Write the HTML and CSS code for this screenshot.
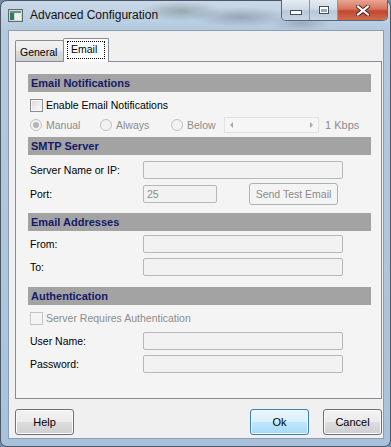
FILE: index.html
```html
<!DOCTYPE html>
<html lang="en">
<head>
  <meta charset="UTF-8">
  <title>Advanced Configuration</title>
  <link rel="stylesheet" href="styles.css">
</head>
<body>
  <div class="window">
    <div class="titlebar">
      <svg class="app-icon" width="15" height="13" viewBox="0 0 15 13">
        <rect x="0.5" y="0.5" width="14" height="12" fill="#cfd8d4" stroke="#5d6a66"/>
        <rect x="2" y="2" width="4" height="9" fill="#2f7a68"/>
        <rect x="7" y="2" width="6" height="9" fill="#e8eeec"/>
        <rect x="2" y="2" width="11" height="2" fill="#6f8f86"/>
      </svg>
      <span class="title">Advanced Configuration</span>
      <div class="caption">
        <span class="cap cap-min"><span class="glyph-min"></span></span>
        <span class="cap cap-max"><span class="glyph-max"></span></span>
        <span class="cap cap-close">
          <svg width="14" height="11" viewBox="0 0 14 11">
            <path d="M2 1.5 L12 9.5 M12 1.5 L2 9.5" stroke="#4a2018" stroke-width="4" stroke-linecap="square"/>
            <path d="M2 1.5 L12 9.5 M12 1.5 L2 9.5" stroke="#ffffff" stroke-width="2.2" stroke-linecap="square"/>
          </svg>
        </span>
      </div>
    </div>

    <div class="client">
      <div class="tabs">
        <div class="tab">General</div>
        <div class="tab tab-active"><span class="focus">Email</span></div>
      </div>

      <div class="panel">
        <section class="group g1">
          <div class="group-head">Email Notifications</div>
          <label class="row check-row first">
            <span class="checkbox"></span>
            <span>Enable Email Notifications</span>
          </label>
          <div class="row radio-row">
            <span class="opt opt-manual"><span class="radio checked"></span>Manual</span>
            <span class="opt opt-always"><span class="radio"></span>Always</span>
            <span class="opt opt-below"><span class="radio"></span>Below</span>
            <span class="slider">
              <span class="arrow arrow-left"></span>
              <span class="arrow arrow-right"></span>
            </span>
            <span class="rate">1 Kbps</span>
          </div>
        </section>

        <section class="group g2">
          <div class="group-head">SMTP Server</div>
          <div class="row field-row first">
            <span class="lbl">Server Name or IP:</span>
            <span class="field"></span>
          </div>
          <div class="row port-row">
            <span class="lbl">Port:</span>
            <span class="field field-port">25</span>
            <span class="btn btn-disabled">Send Test Email</span>
          </div>
        </section>

        <section class="group g3">
          <div class="group-head">Email Addresses</div>
          <div class="row field-row first">
            <span class="lbl">From:</span>
            <span class="field"></span>
          </div>
          <div class="row field-row">
            <span class="lbl">To:</span>
            <span class="field"></span>
          </div>
        </section>

        <section class="group g4">
          <div class="group-head">Authentication</div>
          <label class="row check-row first disabled">
            <span class="checkbox checkbox-disabled"></span>
            <span>Server Requires Authentication</span>
          </label>
          <div class="row field-row user-row">
            <span class="lbl">User Name:</span>
            <span class="field"></span>
          </div>
          <div class="row field-row">
            <span class="lbl">Password:</span>
            <span class="field"></span>
          </div>
        </section>
      </div>

      <div class="actions">
        <span class="btn btn-dialog">Help</span>
        <span class="spacer"></span>
        <span class="btn btn-dialog btn-default">Ok</span>
        <span class="btn btn-dialog">Cancel</span>
      </div>
    </div>
  </div>
</body>
</html>
```

FILE: styles.css
```css
html, body
{
  margin: 0;
  padding: 0;
}
body
{
  width: 391px;
  height: 447px;
  overflow: hidden;
  font-family: "Liberation Sans", Arial, sans-serif;
  font-size: 10.5px;
  color: #000;
  background: #6f8aa6;
}
.window
{
  width: 391px;
  height: 447px;
  box-sizing: border-box;
  border: 1px solid #4d5867;
  border-radius: 7px;
  background:
    radial-gradient(ellipse 40px 10px at 180px 10px, rgba(70, 90, 80, 0.35), transparent),
    radial-gradient(ellipse 50px 10px at 240px 16px, rgba(60, 70, 90, 0.3), transparent),
    radial-gradient(ellipse 30px 8px at 300px 22px, rgba(60, 70, 90, 0.25), transparent),
    linear-gradient(180deg, #c9d8e8 0px, #b4c9df 30px, #a9c2dc 100%);
  display: flex;
  flex-direction: column;
}

/* title bar */
.titlebar
{
  height: 29px;
  display: flex;
  align-items: flex-start;
  padding-left: 7px;
}
.app-icon
{
  margin-top: 8px;
  flex: none;
}
.title
{
  margin-left: 7px;
  margin-top: 7px;
  font-size: 12px;
  color: #111;
  white-space: nowrap;
}
.caption
{
  margin-left: auto;
  margin-right: 2px;
  margin-top: -1px;
  display: flex;
  height: 20px;
  border: 1px solid #5a6677;
  border-top: none;
  border-radius: 0 0 5px 5px;
  overflow: hidden;
}
.cap
{
  display: flex;
  align-items: center;
  justify-content: center;
  height: 20px;
}
.cap-min, .cap-max
{
  width: 27px;
  background: linear-gradient(180deg, #e4ebf3 0%, #d0dbe7 45%, #b9c8d8 55%, #c7d5e3 100%);
  border-right: 1px solid #8796a8;
}
.cap-close
{
  width: 49px;
  background: linear-gradient(180deg, #e8a592 0%, #d7755e 45%, #c4472d 55%, #cf6a4f 100%);
}
.glyph-min
{
  width: 10px;
  height: 3px;
  margin-top: 5px;
  background: #fff;
  border: 1px solid #44505f;
}
.glyph-max
{
  width: 8px;
  height: 6px;
  border: 1px solid #44505f;
  box-shadow: inset 0 2px 0 #fff, inset 0 0 0 1px #fff;
  background: #9aa9bb;
}

/* client */
.client
{
  flex: none;
  height: 409px;
  margin: 0 6px 0 7px;
  box-sizing: border-box;
  background: #f0f0f0;
  border: 1px solid #8a9db3;
  padding: 7px 1px 0 6px;
}
.tabs
{
  display: flex;
  align-items: flex-end;
  height: 23px;
  position: relative;
  z-index: 1;
}
.tab
{
  height: 21px;
  box-sizing: border-box;
  width: 49px;
  padding-left: 4px;
  padding-top: 5px;
  border: 1px solid #898c95;
  border-bottom: none;
  border-radius: 2px 2px 0 0;
  background: linear-gradient(180deg, #f2f2f2 0%, #ebebeb 50%, #dddddd 51%, #cfcfcf 100%);
}
.tab-active
{
  height: 24px;
  width: 46px;
  margin-left: -1px;
  margin-bottom: -1px;
  padding: 2px 3px 0 3px;
  background: #fcfcfc;
}
.focus
{
  display: block;
  border: 1px dotted #000;
  padding: 1px 2px 3px 3px;
}
.panel
{
  height: 338px;
  box-sizing: border-box;
  border: 1px solid #898c95;
  background: #f4f4f4;
  padding: 12px 10px 0 12px;
}

/* sections */
.group-head
{
  height: 18px;
  line-height: 18px;
  background: #a3a3a3;
  color: #141a6a;
  font-weight: bold;
  font-size: 11px;
  padding-left: 3px;
}
.g2 { margin-top: 4px; }
.g3 { margin-top: 8px; }
.g4 { margin-top: 11px; }
.row
{
  display: flex;
  align-items: center;
  padding-left: 2px;
  white-space: nowrap;
}
.check-row
{
  height: 16px;
  margin-top: 5px;
}
.radio-row
{
  height: 16px;
  margin-top: 4px;
  color: #8c8c8c;
}
.field-row
{
  height: 18px;
  margin-top: 5px;
}
.g2 .field-row.first { margin-top: 6px; }
.g3 .field-row.first { margin-top: 4px; }
.user-row { margin-top: 6px; }
.port-row
{
  height: 22px;
  margin-top: 4px;
}
.lbl
{
  width: 113px;
  flex: none;
}
.disabled
{
  color: #8c8c8c;
}

/* controls */
.checkbox
{
  width: 11px;
  height: 11px;
  flex: none;
  border: 1px solid #8e8f8f;
  background: linear-gradient(135deg, #dcdcdc, #fbfbfb);
  box-shadow: inset 0 0 0 1px #f4f4f4;
  margin-right: 3px;
}
.checkbox-disabled
{
  border-color: #c4c4c4;
  background: #f4f4f4;
}
.opt
{
  display: flex;
  align-items: center;
}
.opt-manual { width: 70px; }
.opt-always { width: 71px; }
.opt-below { width: 53px; }
.radio
{
  width: 10px;
  height: 10px;
  flex: none;
  border: 1px solid #c2c2c2;
  border-radius: 50%;
  background: #f2f2f2;
  margin-right: 4px;
  position: relative;
}
.radio.checked::after
{
  content: "";
  position: absolute;
  left: 2px;
  top: 2px;
  width: 6px;
  height: 6px;
  border-radius: 50%;
  background: #b5b5b5;
}
.slider
{
  width: 95px;
  height: 16px;
  box-sizing: border-box;
  border: 1px solid #e2e2e2;
  background: #f6f6f6;
  display: flex;
  align-items: center;
  justify-content: space-between;
  padding: 0 5px;
}
.arrow
{
  width: 0;
  height: 0;
  border-top: 3px solid transparent;
  border-bottom: 3px solid transparent;
}
.arrow-left
{
  border-right: 3px solid #a8a8a8;
}
.arrow-right
{
  border-left: 3px solid #a8a8a8;
}
.rate
{
  margin-left: 6px;
  font-size: 11px;
}
.field
{
  width: 200px;
  height: 18px;
  box-sizing: border-box;
  border: 1px solid #b7b7b7;
  border-radius: 2px;
  background: #f2f2f2;
  padding-left: 3px;
  line-height: 16px;
  color: #8c8c8c;
}
.field-port
{
  width: 74px;
}
.btn
{
  display: flex;
  align-items: center;
  justify-content: center;
  box-sizing: border-box;
  border-radius: 3px;
}
.btn-disabled
{
  width: 89px;
  height: 22px;
  margin-left: 32px;
  border: 1px solid #adb2b5;
  background: #f4f4f4;
  color: #8c8c8c;
}

/* bottom buttons */
.actions
{
  display: flex;
  margin-top: 10px;
  gap: 14px;
}
.spacer
{
  flex: 1;
}
.btn-dialog
{
  width: 59px;
  height: 26px;
  font-size: 11px;
  border: 1px solid #707070;
  background: linear-gradient(180deg, #f2f2f2 0%, #ebebeb 50%, #dddddd 51%, #cfcfcf 100%);
  box-shadow: inset 0 0 0 1px #fbfbfb;
}
.btn-default
{
  border-color: #3c7fb1;
  background: linear-gradient(180deg, #eaf6fd 0%, #d9f0fc 50%, #bee6fd 51%, #a7d9f5 100%);
  box-shadow: inset 0 0 0 1px #f0fafe;
}
```
